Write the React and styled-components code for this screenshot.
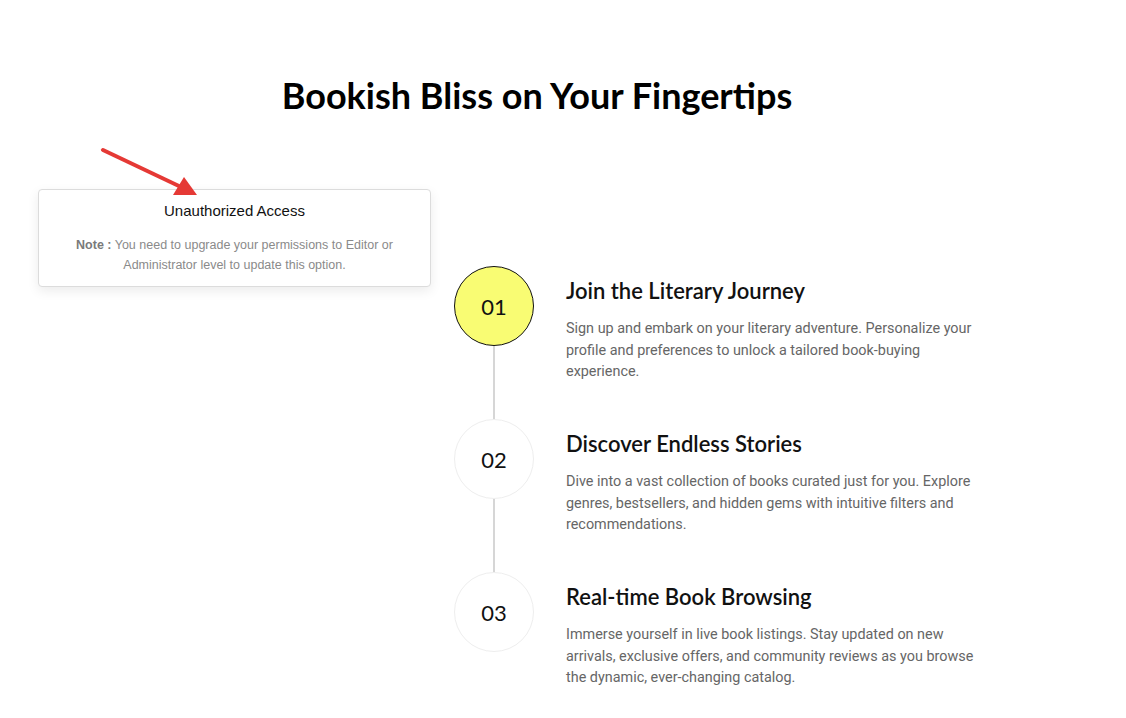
import React from 'react'
import styled, { createGlobalStyle } from 'styled-components'

const GlobalStyle = createGlobalStyle`
  body {
    margin: 0;
    background: #fff;
    font-family: Roboto, "Liberation Sans", sans-serif;
  }
`

const steps = [
  {
    num: '01',
    title: 'Join the Literary Journey',
    text: 'Sign up and embark on your literary adventure. Personalize your profile and preferences to unlock a tailored book-buying experience.',
    active: true,
  },
  {
    num: '02',
    title: 'Discover Endless Stories',
    text: 'Dive into a vast collection of books curated just for you. Explore genres, bestsellers, and hidden gems with intuitive filters and recommendations.',
  },
  {
    num: '03',
    title: 'Real-time Book Browsing',
    text: 'Immerse yourself in live book listings. Stay updated on new arrivals, exclusive offers, and community reviews as you browse the dynamic, ever-changing catalog.',
  },
]

export default function App() {
  return (
    <Page>
      <GlobalStyle />
      <Heading>Bookish Bliss on Your Fingertips</Heading>

      <Timeline>
        {steps.map((s, i) => (
          <Step key={s.num}>
            <Marker>
              <Circle active={s.active}>{s.num}</Circle>
              {i < steps.length - 1 && <Line />}
            </Marker>
            <Content>
              <StepTitle>{s.title}</StepTitle>
              <StepText>{s.text}</StepText>
            </Content>
          </Step>
        ))}
      </Timeline>

      <Notice>
        <NoticeTitle>Unauthorized Access</NoticeTitle>
        <NoticeText>
          <b>Note :</b> You need to upgrade your permissions to Editor or Administrator level to update this option.
        </NoticeText>
      </Notice>

      {/* annotation arrow sits on top of the notice */}
      <Arrow width="110" height="60" viewBox="0 0 110 60">
        <line x1="4" y1="4" x2="82" y2="41" stroke="#e53935" strokeWidth="4" strokeLinecap="round" />
        <polygon points="98,49 74,49 85,31" fill="#e53935" />
      </Arrow>
    </Page>
  )
}

const Page = styled.div`
  position: relative;
  width: 1126px;
  min-height: 718px;
  padding-top: 70px;
  box-sizing: border-box;
`

const Heading = styled.h1`
  width: 1074px;
  margin: 0;
  text-align: center;
  font-family: Lato, "Noto Sans", sans-serif;
  font-weight: 700;
  font-size: 36px;
  line-height: 50px;
  color: #000;
`

const Timeline = styled.div`
  display: flex;
  flex-direction: column;
  margin: 146px 0 0 454px;
  width: 540px;
`

const Step = styled.div`
  display: flex;
  gap: 32px;
`

const Marker = styled.div`
  display: flex;
  flex-direction: column;
  align-items: center;
  width: 80px;
  flex-shrink: 0;
`

const Circle = styled.div`
  width: 80px;
  height: 80px;
  box-sizing: border-box;
  border-radius: 50%;
  display: flex;
  align-items: center;
  justify-content: center;
  font-family: Lato, "Noto Sans", sans-serif;
  font-size: 22px;
  color: #111;
  background: ${p => (p.active ? '#f9fc73' : '#fff')};
  border: 1px solid ${p => (p.active ? '#111' : '#eeeeee')};
`

const Line = styled.div`
  width: 2px;
  height: 73px;
  background: #d6d6d6;
`

const Content = styled.div`
  padding-top: 10px;
  width: 415px;
`

const StepTitle = styled.h3`
  margin: 0;
  font-family: Lato, "Noto Sans", sans-serif;
  font-weight: 600;
  font-size: 22px;
  line-height: 30px;
  color: #111;
`

const StepText = styled.p`
  margin: 12px 0 0;
  font-family: Roboto, sans-serif;
  font-size: 14.4px;
  line-height: 21.5px;
  color: #666;
`

const Arrow = styled.svg`
  position: absolute;
  left: 99px;
  top: 146px;
`

const Notice = styled.div`
  position: absolute;
  left: 38px;
  top: 189px;
  width: 393px;
  height: 98px;
  box-sizing: border-box;
  padding: 11px 24px 0;
  background: #fff;
  border: 1px solid #dcdcdc;
  border-radius: 4px;
  box-shadow: 0 4px 12px rgba(0, 0, 0, 0.08);
  text-align: center;
  font-family: "Liberation Sans", Arial, sans-serif;
`

const NoticeTitle = styled.div`
  font-size: 15px;
  line-height: 20px;
  color: #111;
`

const NoticeText = styled.div`
  margin-top: 14px;
  font-size: 12.5px;
  line-height: 20px;
  color: #8a8a8a;

  b {
    font-weight: 700;
    color: #7a7a7a;
  }
`
